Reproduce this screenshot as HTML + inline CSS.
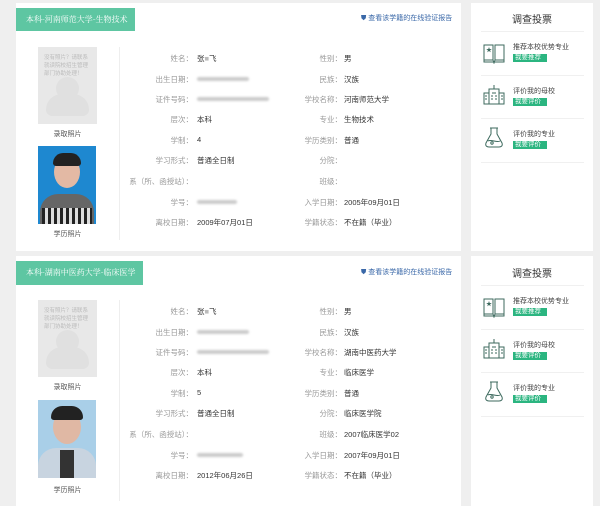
<!DOCTYPE html>
<html><head><meta charset="utf-8"><style>
*{margin:0;padding:0;box-sizing:border-box}
body{width:600px;height:501px;background:#efefef;position:relative;overflow:hidden;font-family:"Liberation Sans","Noto Sans CJK SC",sans-serif;font-size:7.5px;color:#333}
.a{position:absolute}
.card{background:#fff;position:absolute}
.tab{position:absolute;background:#5ec6a2;color:#fff;font-size:8px;line-height:23px;padding-left:10px;font-family:"Noto Serif CJK SC","Noto Sans CJK SC",serif}
.lbl{position:absolute;color:#999;text-align:right;white-space:nowrap}
.val{position:absolute;white-space:nowrap;color:#333}
.blur{position:absolute;height:4px;background:#ccc;border-radius:2px;filter:blur(1px)}
.ph{position:absolute;background:#e8e8e8;width:59px;height:77px;overflow:hidden}
.ph p{position:absolute;left:6px;top:7px;width:48px;color:#bbb;font-size:5.5px;line-height:8px}
.cap{position:absolute;width:59px;text-align:center;color:#555;font-size:7px}
.link{position:absolute;color:#3a68a8;font-size:7px}
.btn{position:absolute;background:#2bb580;color:#fff;font-size:6.5px;line-height:8px;padding:0 2px;width:34px}
.it{position:absolute;font-size:7px;color:#444}
.sep{position:absolute;left:481px;width:103px;height:1px;background:#f0f0f0}
</style></head><body>

<!-- CARD 1 -->
<div class="card" style="left:16px;top:3px;width:445px;height:248px"></div>
<div class="tab" style="left:16px;top:8px;width:119px;height:23px">本科-河南师范大学-生物技术</div>
<div class="link" style="left:361px;top:13px">⛊ 查看该学籍的在线验证报告</div>
<div class="ph" style="left:38px;top:47px"><p>没有照片？请联系就读院校招生管理部门协助处理！</p><div class="a" style="left:18px;top:30px;width:23px;height:23px;border-radius:50%;background:#e0e0e0"></div><div class="a" style="left:8px;top:47px;width:43px;height:22px;border-radius:20px 20px 8px 8px;background:#e0e0e0"></div></div>
<div class="cap" style="left:38px;top:129px">录取照片</div>
<div class="a" style="left:38px;top:146px;width:58px;height:78px;background:#1e88d0;overflow:hidden">
 <div class="a" style="left:16px;top:10px;width:26px;height:32px;border-radius:50%;background:#e3b9a4"></div>
 <div class="a" style="left:15px;top:7px;width:28px;height:13px;border-radius:14px 14px 4px 4px;background:#222"></div>
 <div class="a" style="left:2px;top:48px;width:54px;height:30px;border-radius:18px 18px 0 0;background:#666"></div>
 <div class="a" style="left:4px;top:62px;width:50px;height:16px;background:repeating-linear-gradient(90deg,#222 0 3px,#ddd 3px 6px)"></div>
</div>
<div class="cap" style="left:38px;top:229px">学历照片</div>
<div class="a" style="left:119px;top:47px;width:1px;height:193px;background:#eee"></div>

<div class="lbl" style="right:407px;top:53px">姓名：</div><div class="val" style="left:197px;top:53px">张<span style="color:#bbb">■</span>飞</div>
<div class="lbl" style="right:407px;top:74px">出生日期：</div><div class="blur" style="left:197px;top:77px;width:52px"></div>
<div class="lbl" style="right:407px;top:94px">证件号码：</div><div class="blur" style="left:197px;top:97px;width:72px"></div>
<div class="lbl" style="right:407px;top:114px">层次：</div><div class="val" style="left:197px;top:114px">本科</div>
<div class="lbl" style="right:407px;top:135px">学制：</div><div class="val" style="left:197px;top:135px">4</div>
<div class="lbl" style="right:407px;top:155px">学习形式：</div><div class="val" style="left:197px;top:155px">普通全日制</div>
<div class="lbl" style="right:407px;top:176px">系（所、函授站）：</div>
<div class="lbl" style="right:407px;top:197px">学号：</div><div class="blur" style="left:197px;top:200px;width:40px"></div>
<div class="lbl" style="right:407px;top:217px">离校日期：</div><div class="val" style="left:197px;top:217px">2009年07月01日</div>

<div class="lbl" style="right:258px;top:53px">性别：</div><div class="val" style="left:344px;top:53px">男</div>
<div class="lbl" style="right:258px;top:74px">民族：</div><div class="val" style="left:344px;top:74px">汉族</div>
<div class="lbl" style="right:258px;top:94px">学校名称：</div><div class="val" style="left:344px;top:94px">河南师范大学</div>
<div class="lbl" style="right:258px;top:114px">专业：</div><div class="val" style="left:344px;top:114px">生物技术</div>
<div class="lbl" style="right:258px;top:135px">学历类别：</div><div class="val" style="left:344px;top:135px">普通</div>
<div class="lbl" style="right:258px;top:155px">分院：</div>
<div class="lbl" style="right:258px;top:176px">班级：</div>
<div class="lbl" style="right:258px;top:197px">入学日期：</div><div class="val" style="left:344px;top:197px">2005年09月01日</div>
<div class="lbl" style="right:258px;top:217px">学籍状态：</div><div class="val" style="left:344px;top:217px">不在籍（毕业）</div>

<!-- RIGHT 1 -->
<div class="card" style="left:471px;top:3px;width:122px;height:248px"></div>
<div class="a" style="left:471px;top:11px;width:122px;text-align:center;font-size:10px;color:#333">调查投票</div>
<div class="sep" style="top:31px"></div>
<svg class="a" style="left:483px;top:43px" width="22" height="21" viewBox="0 0 22 21" fill="none" stroke="#3d6a5e" stroke-width="1"><path d="M1 2h9v15H1zM12 2h9v15h-9zM10 17l1 3 1-3M1 17v2h20v-2"/><text x="3" y="9" font-size="6" fill="#3d6a5e" stroke="none">★</text></svg>
<div class="it" style="left:513px;top:42px">推荐本校优势专业</div><div class="btn" style="left:513px;top:54px">我要推荐</div>
<div class="sep" style="top:75px"></div>
<svg class="a" style="left:483px;top:84px" width="22" height="21" viewBox="0 0 22 21" fill="none" stroke="#3d6a5e" stroke-width="1"><path d="M6 5h10v15H6zM1 9h5v11H1zM16 9h5v11h-5zM11 1v4M9 9h4M8 12h2M12 12h2M8 15h2M12 15h2M2 12h2M2 15h2M18 12h2M18 15h2"/></svg>
<div class="it" style="left:513px;top:86px">评价我的母校</div><div class="btn" style="left:513px;top:98px">我要评价</div>
<div class="sep" style="top:118px"></div>
<svg class="a" style="left:484px;top:127px" width="20" height="21" viewBox="0 0 20 21" fill="none" stroke="#3d6a5e" stroke-width="1"><path d="M6 1h8M7 1v6L2 16c-1 3 1 4 3 4h10c2 0 4-1 3-4L13 7V1M4 14c3-2 9 2 12 0"/><circle cx="8" cy="16" r="1.2"/></svg>
<div class="it" style="left:513px;top:129px">评价我的专业</div><div class="btn" style="left:513px;top:141px">我要评价</div>
<div class="sep" style="top:162px"></div>

<!-- CARD 2 -->
<div class="card" style="left:16px;top:256px;width:445px;height:250px"></div>
<div class="tab" style="left:16px;top:261px;width:127px;height:24px">本科-湖南中医药大学-临床医学</div>
<div class="link" style="left:361px;top:267px">⛊ 查看该学籍的在线验证报告</div>
<div class="ph" style="left:38px;top:300px"><p>没有照片？请联系就读院校招生管理部门协助处理！</p><div class="a" style="left:18px;top:30px;width:23px;height:23px;border-radius:50%;background:#e0e0e0"></div><div class="a" style="left:8px;top:47px;width:43px;height:22px;border-radius:20px 20px 8px 8px;background:#e0e0e0"></div></div>
<div class="cap" style="left:38px;top:382px">录取照片</div>
<div class="a" style="left:38px;top:400px;width:58px;height:78px;background:#a9cfe8;overflow:hidden">
 <div class="a" style="left:15px;top:10px;width:28px;height:34px;border-radius:50%;background:#e0b8a4"></div>
 <div class="a" style="left:13px;top:6px;width:32px;height:14px;border-radius:16px 16px 4px 4px;background:#222"></div>
 <div class="a" style="left:0px;top:48px;width:58px;height:30px;border-radius:18px 18px 0 0;background:#c8d4e0"></div>
 <div class="a" style="left:22px;top:50px;width:14px;height:28px;background:#333"></div>
</div>
<div class="cap" style="left:38px;top:485px">学历照片</div>
<div class="a" style="left:119px;top:300px;width:1px;height:201px;background:#eee"></div>

<div class="lbl" style="right:407px;top:306px">姓名：</div><div class="val" style="left:197px;top:306px">张<span style="color:#bbb">■</span>飞</div>
<div class="lbl" style="right:407px;top:327px">出生日期：</div><div class="blur" style="left:197px;top:330px;width:52px"></div>
<div class="lbl" style="right:407px;top:347px">证件号码：</div><div class="blur" style="left:197px;top:350px;width:72px"></div>
<div class="lbl" style="right:407px;top:367px">层次：</div><div class="val" style="left:197px;top:367px">本科</div>
<div class="lbl" style="right:407px;top:388px">学制：</div><div class="val" style="left:197px;top:388px">5</div>
<div class="lbl" style="right:407px;top:408px">学习形式：</div><div class="val" style="left:197px;top:408px">普通全日制</div>
<div class="lbl" style="right:407px;top:429px">系（所、函授站）：</div>
<div class="lbl" style="right:407px;top:450px">学号：</div><div class="blur" style="left:197px;top:453px;width:46px"></div>
<div class="lbl" style="right:407px;top:470px">离校日期：</div><div class="val" style="left:197px;top:470px">2012年06月26日</div>

<div class="lbl" style="right:258px;top:306px">性别：</div><div class="val" style="left:344px;top:306px">男</div>
<div class="lbl" style="right:258px;top:327px">民族：</div><div class="val" style="left:344px;top:327px">汉族</div>
<div class="lbl" style="right:258px;top:347px">学校名称：</div><div class="val" style="left:344px;top:347px">湖南中医药大学</div>
<div class="lbl" style="right:258px;top:367px">专业：</div><div class="val" style="left:344px;top:367px">临床医学</div>
<div class="lbl" style="right:258px;top:388px">学历类别：</div><div class="val" style="left:344px;top:388px">普通</div>
<div class="lbl" style="right:258px;top:408px">分院：</div><div class="val" style="left:344px;top:408px">临床医学院</div>
<div class="lbl" style="right:258px;top:429px">班级：</div><div class="val" style="left:344px;top:429px">2007临床医学02</div>
<div class="lbl" style="right:258px;top:450px">入学日期：</div><div class="val" style="left:344px;top:450px">2007年09月01日</div>
<div class="lbl" style="right:258px;top:470px">学籍状态：</div><div class="val" style="left:344px;top:470px">不在籍（毕业）</div>

<!-- RIGHT 2 -->
<div class="card" style="left:471px;top:256px;width:122px;height:250px"></div>
<div class="a" style="left:471px;top:265px;width:122px;text-align:center;font-size:10px;color:#333">调查投票</div>
<div class="sep" style="top:285px"></div>
<svg class="a" style="left:483px;top:297px" width="22" height="21" viewBox="0 0 22 21" fill="none" stroke="#3d6a5e" stroke-width="1"><path d="M1 2h9v15H1zM12 2h9v15h-9zM10 17l1 3 1-3M1 17v2h20v-2"/><text x="3" y="9" font-size="6" fill="#3d6a5e" stroke="none">★</text></svg>
<div class="it" style="left:513px;top:296px">推荐本校优势专业</div><div class="btn" style="left:513px;top:308px">我要推荐</div>
<div class="sep" style="top:329px"></div>
<svg class="a" style="left:483px;top:338px" width="22" height="21" viewBox="0 0 22 21" fill="none" stroke="#3d6a5e" stroke-width="1"><path d="M6 5h10v15H6zM1 9h5v11H1zM16 9h5v11h-5zM11 1v4M9 9h4M8 12h2M12 12h2M8 15h2M12 15h2M2 12h2M2 15h2M18 12h2M18 15h2"/></svg>
<div class="it" style="left:513px;top:340px">评价我的母校</div><div class="btn" style="left:513px;top:352px">我要评价</div>
<div class="sep" style="top:372px"></div>
<svg class="a" style="left:484px;top:381px" width="20" height="21" viewBox="0 0 20 21" fill="none" stroke="#3d6a5e" stroke-width="1"><path d="M6 1h8M7 1v6L2 16c-1 3 1 4 3 4h10c2 0 4-1 3-4L13 7V1M4 14c3-2 9 2 12 0"/><circle cx="8" cy="16" r="1.2"/></svg>
<div class="it" style="left:513px;top:383px">评价我的专业</div><div class="btn" style="left:513px;top:395px">我要评价</div>
<div class="sep" style="top:416px"></div>

</body></html>
